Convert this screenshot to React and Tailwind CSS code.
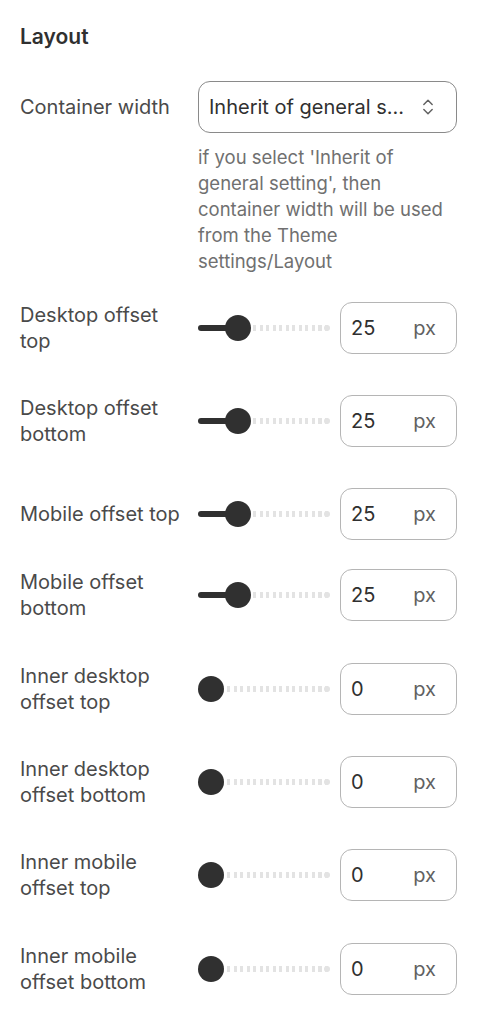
import { ChevronsUpDown } from 'lucide-react';

const rows = [
  { label: 'Desktop offset top', value: 25, mt: 'mt-[28px]' },
  { label: 'Desktop offset bottom', value: 25, mt: 'mt-[41px]' },
  { label: 'Mobile offset top', value: 25, mt: 'mt-[41px]' },
  { label: 'Mobile offset bottom', value: 25, mt: 'mt-[29px]' },
  { label: 'Inner desktop offset top', value: 0, mt: 'mt-[42px]' },
  { label: 'Inner desktop offset bottom', value: 0, mt: 'mt-[41px]' },
  { label: 'Inner mobile offset top', value: 0, mt: 'mt-[41px]' },
  { label: 'Inner mobile offset bottom', value: 0, mt: 'mt-[42px]' },
];

function Slider({ value }) {
  // thumb travel = track width - thumb size
  const left = (value / 100) * (132 - 26);
  return (
    <div className="relative w-[132px] h-[26px] flex items-center">
      <div className="absolute left-[10px] right-0 h-[6px] rounded-full bg-[repeating-linear-gradient(90deg,#e3e3e3_0_3px,transparent_3px_6.5px)]" />
      <div className="absolute right-0 w-[6px] h-[6px] rounded-full bg-[#e3e3e3]" />
      {value > 0 && (
        <div
          className="absolute left-0 h-[6px] rounded-full bg-[#303030]"
          style={{ width: left + 13 }}
        />
      )}
      <div
        className="absolute w-[26px] h-[26px] rounded-full bg-[#303030]"
        style={{ left }}
      />
    </div>
  );
}

export default function App() {
  return (
    <div className="w-[484px] min-h-[1024px] bg-white pl-5 pr-[27px] pt-[24px] font-['Inter',sans-serif] text-[20px] leading-[26px] text-[#4a4a4a]">
      <h2 className="text-[21px] leading-[26px] font-semibold text-[#303030]">Layout</h2>

      <div className="mt-[31px] flex items-center">
        <div className="w-[178px]">Container width</div>
        <div className="flex-1 h-[52px] rounded-[12px] border border-[#8a8a8a] flex items-center justify-between pl-[10px] pr-[18px] text-[#303030]">
          <span>Inherit of general s...</span>
          <ChevronsUpDown size={20} strokeWidth={1.75} className="text-[#616161]" />
        </div>
      </div>
      <p className="mt-[11px] ml-[178px] text-[18.5px] text-[#707070]">
        if you select 'Inherit of general setting', then container width will be used from the Theme settings/Layout
      </p>

      {rows.map((r) => (
        <div key={r.label} className={`${r.mt} flex items-center`}>
          <div className="w-[178px] pr-2">{r.label}</div>
          <Slider value={r.value} />
          <div className="ml-[10px] flex-1 h-[52px] rounded-[12px] border border-[#b5b5b5] flex items-center justify-between pl-[10px] pr-[20px] text-[#303030]">
            <span>{r.value}</span>
            <span className="text-[#616161]">px</span>
          </div>
        </div>
      ))}
    </div>
  );
}
